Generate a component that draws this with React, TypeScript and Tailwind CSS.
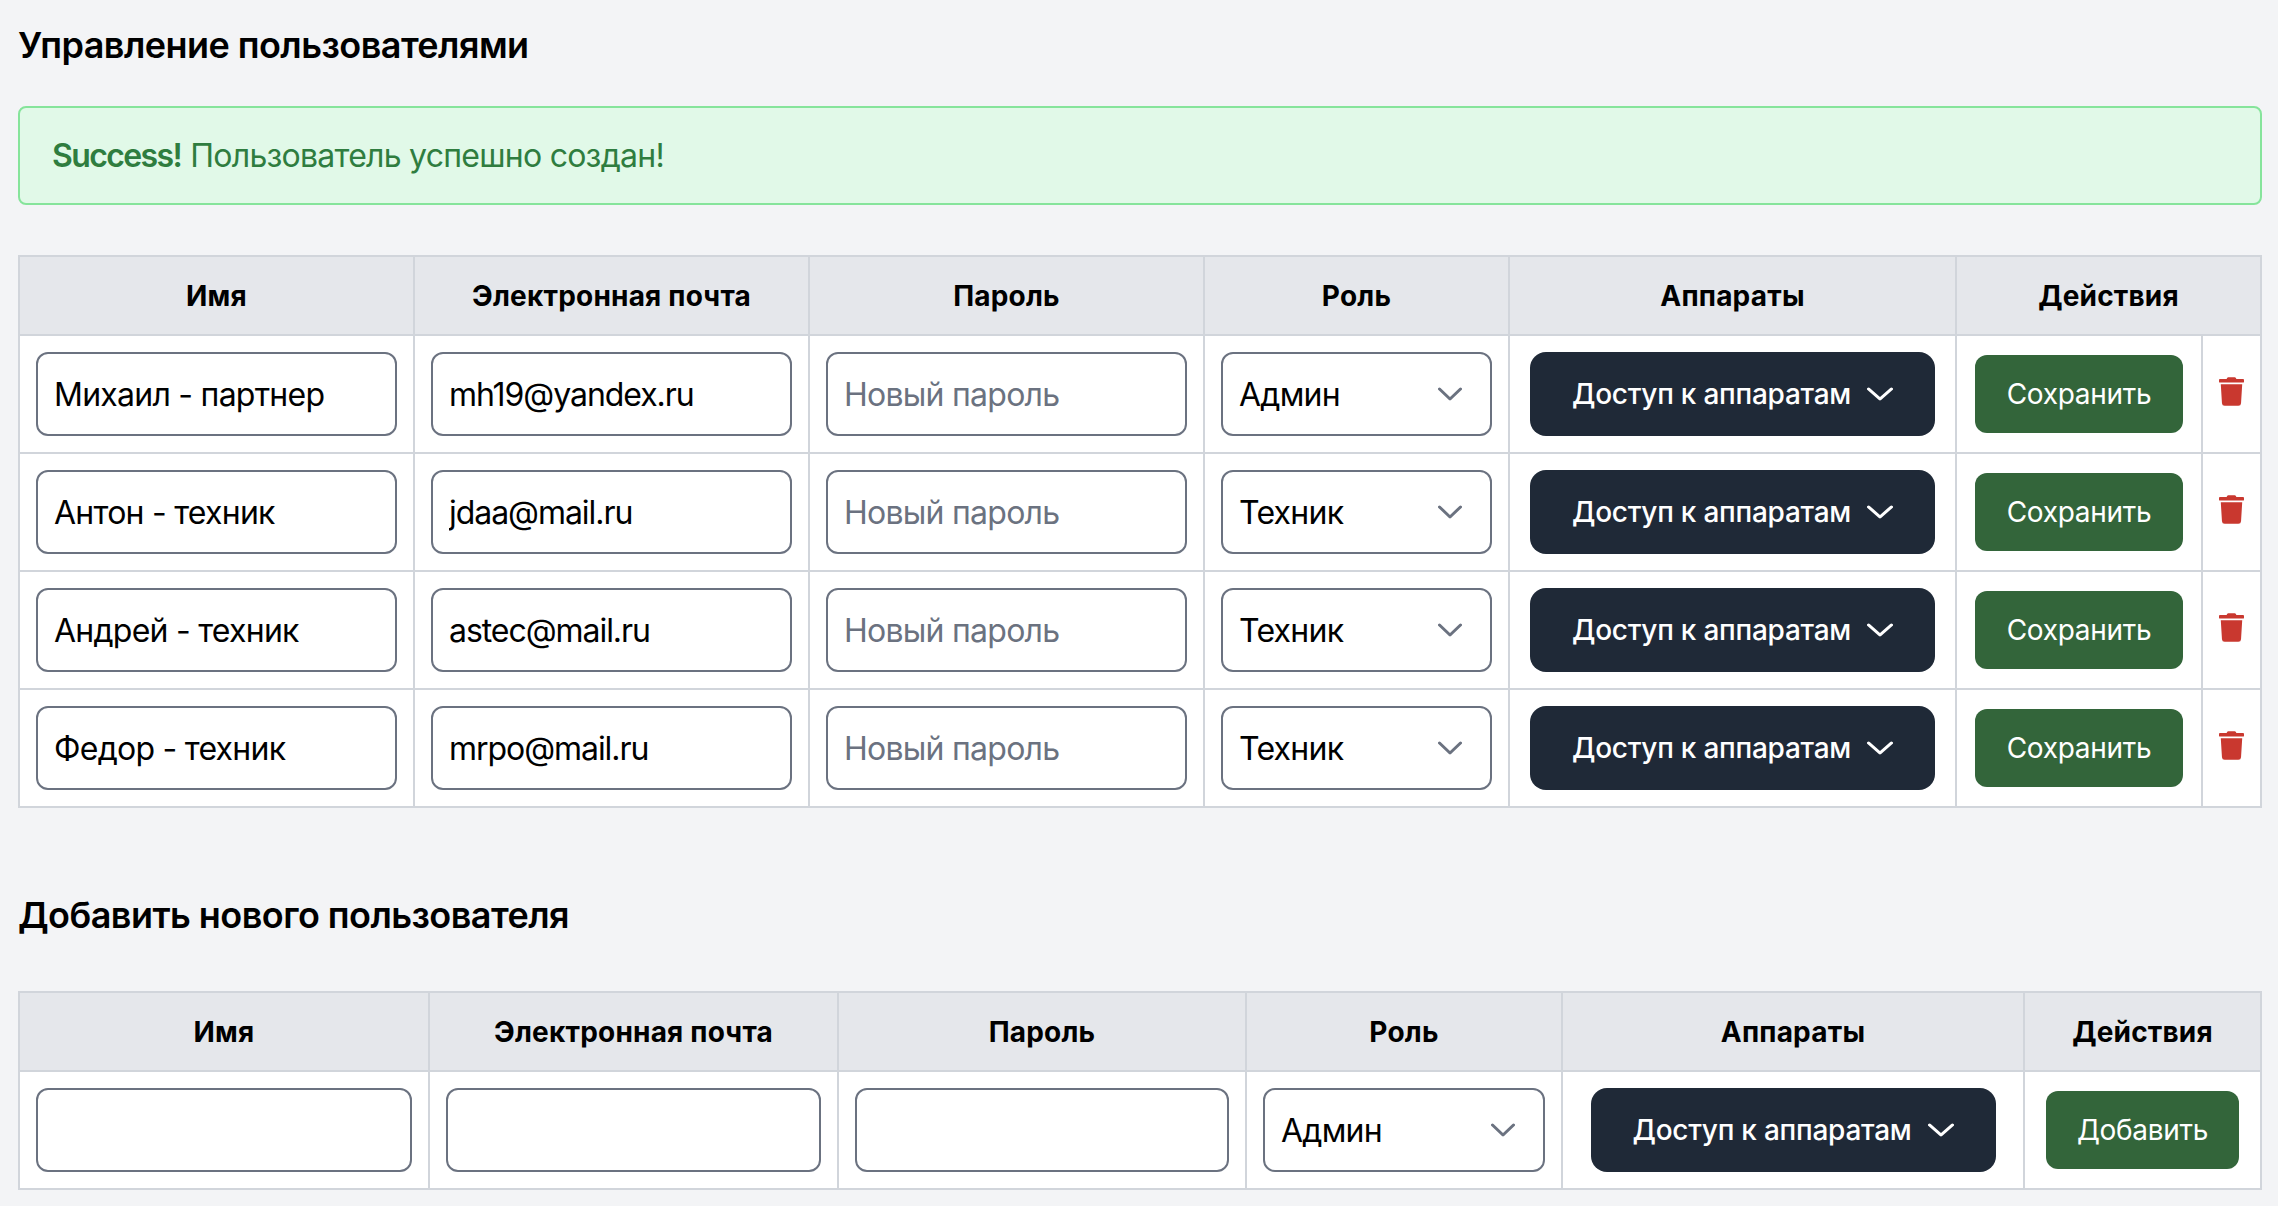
import React from 'react';
import { FaTrash } from 'react-icons/fa';

const users = [
  { name: 'Михаил - партнер', email: 'mh19@yandex.ru', role: 'Админ' },
  { name: 'Антон - техник', email: 'jdaa@mail.ru', role: 'Техник' },
  { name: 'Андрей - техник', email: 'astec@mail.ru', role: 'Техник' },
  { name: 'Федор - техник', email: 'mrpo@mail.ru', role: 'Техник' },
];

const thClass = 'border-2 border-[#d1d5db] bg-[#e5e7eb] h-[79px] text-[28px] font-bold tracking-[0.2px] text-black text-center align-middle';
const tdClass = 'border-2 border-[#d1d5db] px-4 py-4 align-middle';
const inputClass = 'block w-full h-[84px] rounded-[12px] border-2 border-[#6b7280] bg-white px-4 text-[32px] tracking-[-0.75px] text-black placeholder:text-[#6b7280] outline-none';

function Chevron({ className }: { className: string }) {
  return (
    <svg viewBox="0 0 24 14" preserveAspectRatio="none" className={className} fill="none" stroke="currentColor" strokeWidth="3" strokeLinecap="round" strokeLinejoin="round">
      <path d="M1.5 2L12 12 22.5 2" />
    </svg>
  );
}

function RoleSelect({ value }: { value: string }) {
  return (
    <div className="relative">
      <select defaultValue={value} className={`${inputClass} appearance-none pt-[2px]`}>
        <option>Админ</option>
        <option>Техник</option>
      </select>
      <Chevron className="absolute right-[30px] top-[35px] w-[24px] h-[14px] text-[#6b7280] pointer-events-none" />
    </div>
  );
}

function DevicesButton() {
  return (
    <button className="mx-auto flex items-center gap-[16px] h-[84px] px-[42px] rounded-[16px] bg-[#1f2937] text-white text-[28px] font-medium tracking-[-0.25px] whitespace-nowrap">
      Доступ к аппаратам
      <Chevron className="w-[26px] h-[14px]" />
    </button>
  );
}

function GreenButton({ label, padding }: { label: string; padding: string }) {
  return (
    <button className={`mx-auto block h-[78px] ${padding} rounded-[12px] bg-[#33653a] text-white text-[28px] tracking-[-0.3px] whitespace-nowrap`}>
      {label}
    </button>
  );
}

function HeaderRow() {
  return (
    <>
      <th className={thClass}>Имя</th>
      <th className={thClass}>Электронная почта</th>
      <th className={thClass}>Пароль</th>
      <th className={thClass}>Роль</th>
      <th className={thClass}>Аппараты</th>
    </>
  );
}

export default function App() {
  return (
    <div className="min-h-screen bg-[#f3f4f6] px-[18px] pt-[18px] font-['Inter',sans-serif]">
      <h2 className="text-[36px] leading-[54px] font-semibold tracking-[-0.55px] text-black">Управление пользователями</h2>

      <div className="mt-[34px] -mr-[2px] h-[99px] flex items-center rounded-[8px] border-2 border-[#86e49b] bg-[#e1f9e8] px-[32px] text-[32px] tracking-[-0.75px] text-[#2f7d3f]">
        <strong className="font-semibold tracking-[-1.6px] mr-[9px]">Success!</strong> Пользователь успешно создан!
      </div>

      <table className="mt-[50px] w-full table-fixed border-collapse bg-white">
        <colgroup>
          <col className="w-[395px]" />
          <col className="w-[395px]" />
          <col className="w-[395px]" />
          <col className="w-[305px]" />
          <col className="w-[447px]" />
          <col className="w-[246px]" />
          <col className="w-[59px]" />
        </colgroup>
        <thead>
          <tr>
            <HeaderRow />
            <th colSpan={2} className={thClass}>Действия</th>
          </tr>
        </thead>
        <tbody>
          {users.map(u => (
            <tr key={u.email}>
              <td className={tdClass}><input type="text" defaultValue={u.name} className={inputClass} /></td>
              <td className={tdClass}><input type="email" defaultValue={u.email} className={`${inputClass} tracking-[-1.05px]`} /></td>
              <td className={tdClass}><input type="password" placeholder="Новый пароль" className={inputClass} /></td>
              <td className={tdClass}><RoleSelect value={u.role} /></td>
              <td className={tdClass}><DevicesButton /></td>
              <td className={tdClass}><GreenButton label="Сохранить" padding="px-[32px]" /></td>
              <td className="border-2 border-[#d1d5db] align-middle">
                <FaTrash className="mx-auto -mt-[5px] w-[25px] h-[29px] text-[#c9382f]" />
              </td>
            </tr>
          ))}
        </tbody>
      </table>

      <h2 className="mt-[80px] text-[36px] leading-[54px] font-semibold tracking-[-0.55px] text-black">Добавить нового пользователя</h2>

      <table className="mt-[49px] w-full table-fixed border-collapse bg-white">
        <colgroup>
          <col className="w-[410px]" />
          <col className="w-[409px]" />
          <col className="w-[408px]" />
          <col className="w-[316px]" />
          <col className="w-[462px]" />
          <col className="w-[237px]" />
        </colgroup>
        <thead>
          <tr>
            <HeaderRow />
            <th className={thClass}>Действия</th>
          </tr>
        </thead>
        <tbody>
          <tr>
            <td className={tdClass}><input type="text" className={inputClass} /></td>
            <td className={tdClass}><input type="email" className={inputClass} /></td>
            <td className={tdClass}><input type="password" className={inputClass} /></td>
            <td className={tdClass}><RoleSelect value="Админ" /></td>
            <td className={tdClass}><DevicesButton /></td>
            <td className={tdClass}><GreenButton label="Добавить" padding="px-[31px]" /></td>
          </tr>
        </tbody>
      </table>
    </div>
  );
}
